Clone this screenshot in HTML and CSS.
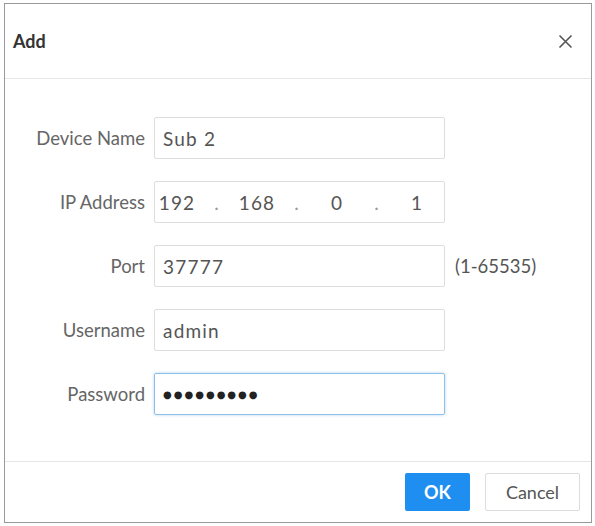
FILE: index.html
```html
<!DOCTYPE html>
<html lang="en">
<head>
  <meta charset="UTF-8">
  <title>Add</title>
  <link rel="stylesheet" href="styles.css">
</head>
<body>
  <div class="dialog">
    <div class="dialog-header">
      <span class="title">Add</span>
      <svg class="close" width="15" height="15" viewBox="0 0 15 15">
        <path d="M1.5 1.5 L13.5 13.5 M13.5 1.5 L1.5 13.5" stroke="#555" stroke-width="1.6" fill="none"/>
      </svg>
    </div>

    <div class="dialog-body">
      <label class="label">Device Name</label>
      <div class="field">Sub 2</div>
      <span></span>

      <label class="label">IP Address</label>
      <div class="field ip">
        <span class="seg">192</span><span class="dot">.</span>
        <span class="seg">168</span><span class="dot">.</span>
        <span class="seg">0</span><span class="dot">.</span>
        <span class="seg">1</span>
      </div>
      <span></span>

      <label class="label">Port</label>
      <div class="field">37777</div>
      <span class="hint">(1-65535)</span>

      <label class="label">Username</label>
      <div class="field">admin</div>
      <span></span>

      <label class="label">Password</label>
      <div class="field focused"><span class="pwd">&#9679;&#9679;&#9679;&#9679;&#9679;&#9679;&#9679;&#9679;&#9679;</span></div>
      <span></span>
    </div>

    <div class="dialog-footer">
      <button class="btn btn-ok">OK</button>
      <button class="btn btn-cancel">Cancel</button>
    </div>
  </div>
</body>
</html>
```

FILE: styles.css
```css
* {
  margin: 0;
  padding: 0;
  box-sizing: border-box;
}

body {
  font-family: Lato, "Open Sans", sans-serif;
  background-color: #fff;
  color: #555;
  padding: 3px 3px 3px 4px;
}

.dialog {
  height: 520px;
  border: 1px solid #999;
  display: flex;
  flex-direction: column;
}

.dialog-header {
  height: 75px;
  display: flex;
  align-items: center;
  justify-content: space-between;
  padding: 0 18px 0 8px;
  border-bottom: 1px solid #e6e6e6;
}

.title {
  font-size: 18px;
  font-weight: bold;
  color: #333;
}

.close {
  display: block;
}

.dialog-body {
  flex: 1;
  display: grid;
  grid-template-columns: 140px 291px auto;
  grid-auto-rows: 42px;
  column-gap: 9px;
  row-gap: 22px;
  align-content: start;
  align-items: center;
  padding-top: 38px;
  font-size: 18.5px;
}

.label {
  text-align: right;
  color: #666;
}

.field {
  height: 42px;
  border: 1px solid #ddd;
  border-radius: 2px;
  display: flex;
  align-items: center;
  padding: 0 8px;
  color: #555;
  font-size: 19px;
  letter-spacing: 1.2px;
}

.field.ip {
  padding: 0;
}

.seg {
  width: 44px;
  text-align: center;
}

.dot {
  width: 36px;
  text-align: center;
  color: #999;
}

.field.focused {
  border-color: #8cc0e8;
  box-shadow: 0 0 3px rgba(100, 170, 230, 0.5);
}

.pwd {
  font-family: "DejaVu Sans", sans-serif;
  font-size: 10px;
  letter-spacing: 2px;
  color: #222;
}

.hint {
  padding-left: 1px;
  color: #555;
}

.dialog-footer {
  height: 61px;
  border-top: 1px solid #e6e6e6;
  display: flex;
  justify-content: flex-end;
  align-items: center;
  gap: 15px;
  padding-right: 11px;
}

.btn {
  height: 38px;
  border-radius: 2px;
  font-family: Lato, sans-serif;
  font-size: 18px;
}

.btn-ok {
  width: 65px;
  background-color: #1e8ff0;
  border: none;
  color: #fff;
  font-weight: bold;
}

.btn-cancel {
  width: 95px;
  background-color: #fff;
  border: 1px solid #ddd;
  color: #555;
}
```
